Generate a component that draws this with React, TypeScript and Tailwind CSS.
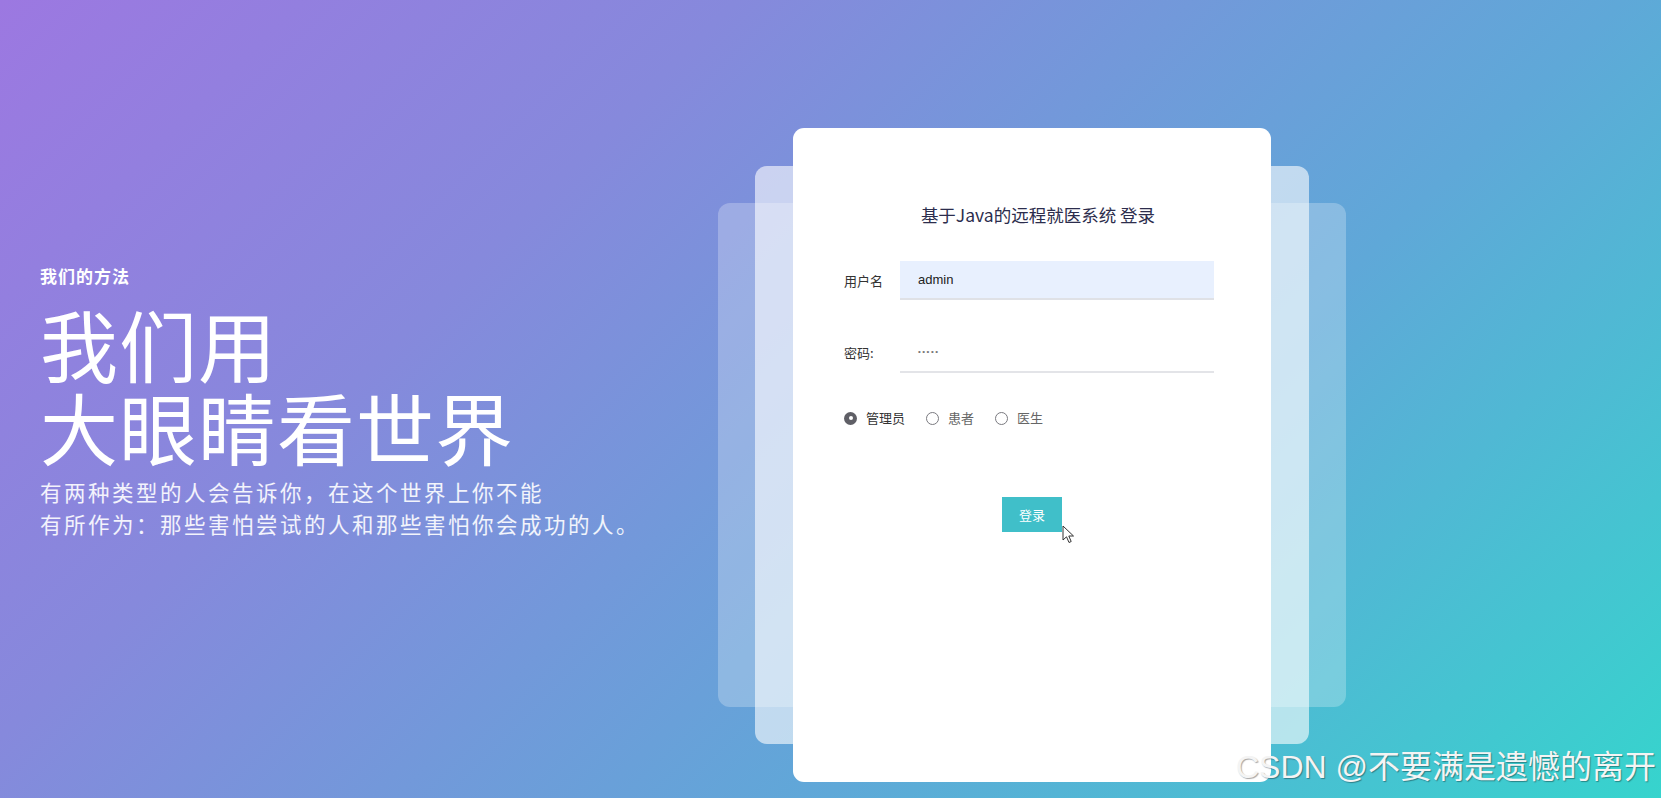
import React from 'react';

const cjk = '"Noto Sans CJK SC", "Noto Sans", sans-serif';
const latin = '"Liberation Sans", "Noto Sans CJK SC", sans-serif';

function Radio({ label, checked }: { label: string; checked?: boolean }) {
  return (
    <label className="flex items-center gap-[9px]">
      {checked ? (
        <span className="w-[13px] h-[13px] rounded-full bg-[#5f5f66] flex items-center justify-center">
          <span className="w-[4px] h-[4px] rounded-full bg-white" />
        </span>
      ) : (
        <span className="w-[13px] h-[13px] rounded-full border border-[#7a7a80] bg-white" />
      )}
      <span className={`text-[13px] leading-[18px] ${checked ? 'text-[#333]' : 'text-[#666]'}`}>{label}</span>
    </label>
  );
}

export default function App() {
  return (
    <div
      className="relative w-full h-[798px] overflow-hidden flex bg-[linear-gradient(135deg,#9c78e1_0%,#8689dc_30%,#5fa8d8_66%,#36d4cd_100%)]"
      style={{ fontFamily: cjk }}
    >
      {/* left intro */}
      <div className="w-[793px] shrink-0 pl-[40px] pt-[264px] text-white">
        <div className="text-[17px] leading-[24px] font-bold tracking-[1px]">我们的方法</div>
        <h1 className="mt-[14px] text-[78px] leading-[83px] font-normal tracking-[1px]">
          我们用
          <br />
          大眼睛看世界
        </h1>
        <p className="mt-[8px] text-[21.5px] leading-[32px] tracking-[2.5px] text-white/90">
          有两种类型的人会告诉你，在这个世界上你不能
          <br />
          有所作为：那些害怕尝试的人和那些害怕你会成功的人。
        </p>
      </div>

      {/* login card stack */}
      <div className="pt-[128px]">
        <div className="relative w-[478px] h-[654px]">
          <div className="absolute top-[75px] bottom-[75px] -left-[75px] -right-[75px] rounded-[12px] bg-white/25" />
          <div className="absolute top-[38px] bottom-[38px] -left-[38px] -right-[38px] rounded-[12px] bg-white/60" />
          <div className="relative h-full rounded-[11px] bg-white pt-[74px] pl-[51px] pr-[57px]">
            <h2 className="pl-[18px] text-center text-[17.5px] leading-[26px] text-[#2c2d4d]">
              基于Java的远程就医系统 登录
            </h2>

            <div className="mt-[33px] flex items-center">
              <span className="w-[56px] text-[13px] text-[#333]">用户名</span>
              <div className="flex-1 h-[39px] bg-[#e8f0fe] border-b-2 border-[#dfe1e6] pl-[18px] flex items-center">
                <span className="text-[13px] text-[#222]" style={{ fontFamily: latin }}>admin</span>
              </div>
            </div>

            <div className="mt-[33px] flex items-center">
              <span className="w-[56px] text-[13px] text-[#333]">密码:</span>
              <div className="flex-1 h-[40px] border-b-2 border-[#e3e4e8] pl-[18px] flex items-center">
                <span className="text-[8px] tracking-[1.5px] text-[#777]" style={{ fontFamily: latin }}>•••••</span>
              </div>
            </div>

            <div className="mt-[36px] flex items-center gap-[21px]">
              <Radio label="管理员" checked />
              <Radio label="患者" />
              <Radio label="医生" />
            </div>

            <div className="mt-[70px] flex justify-center pl-[6px]">
              <div className="relative">
                <button className="w-[60px] h-[35px] bg-[#40bfc9] text-white text-[13px]">登录</button>
                <svg className="absolute left-[60px] top-[28px]" width="14" height="20" viewBox="0 0 14 20">
                  <path d="M1 1 L1 15 L4.5 11.8 L7 17.5 L9.2 16.5 L6.8 11 L11.5 11 Z" fill="#fff" stroke="#333" strokeWidth="1" strokeLinejoin="round" />
                </svg>
              </div>
            </div>
          </div>
        </div>
      </div>

      {/* watermark */}
      <div
        className="absolute right-[5px] bottom-[13px] text-[32px] leading-[36px] text-[#f4f4f4] [text-shadow:1px_1px_1px_rgba(0,0,0,0.35)]"
        style={{ fontFamily: latin }}
      >
        CSDN @不要满是遗憾的离开
      </div>
    </div>
  );
}
